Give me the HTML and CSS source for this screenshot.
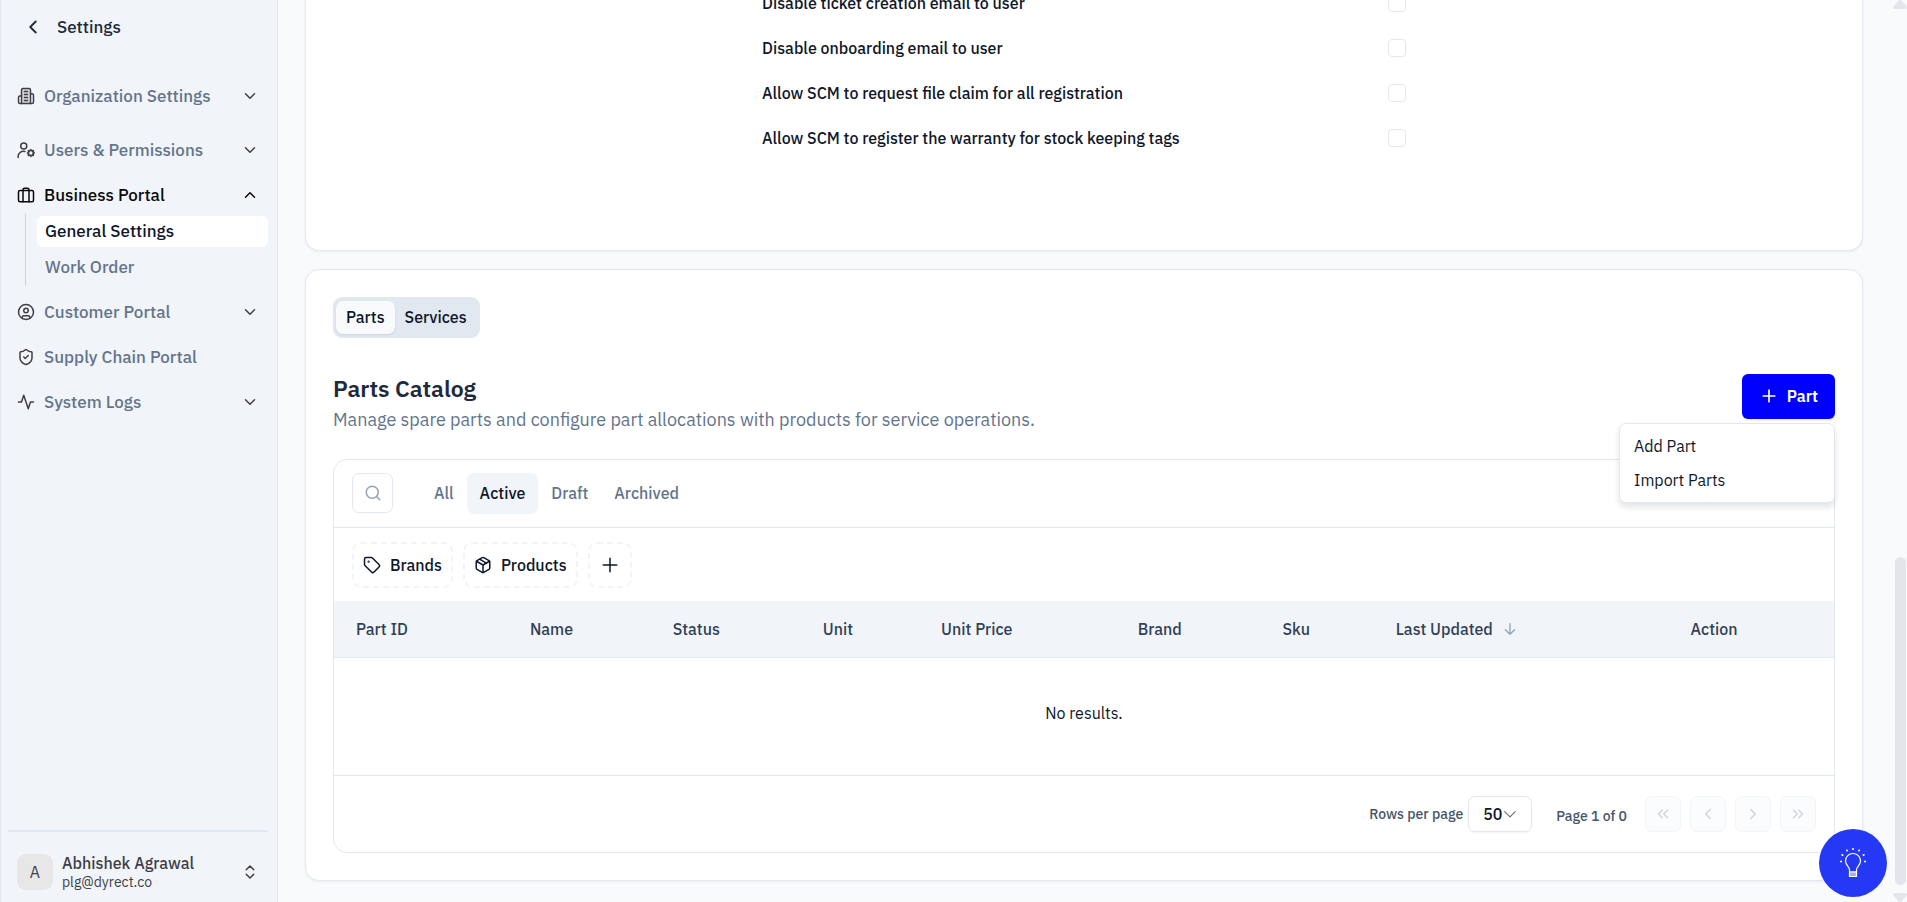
FILE: index.html
```html
<!DOCTYPE html>
<html lang="en">
<head>
  <meta charset="UTF-8" />
  <meta name="viewport" content="width=device-width, initial-scale=1.0" />
  <title>Settings - General Settings</title>
  <link rel="stylesheet" href="styles.css">
</head>
<body>
  <aside class="sidebar">
    <a href="#" class="back-link">
      <svg class="icon icon-back" viewBox="0 0 24 24"><path d="m15 18-6-6 6-6"/></svg>
      Settings
    </a>

    <nav class="menu">
      <button class="menu-item first">
        <svg class="icon" viewBox="0 0 24 24"><path class="shade" d="M6 22V4a2 2 0 0 1 2-2h8a2 2 0 0 1 2 2v18Z"/><path d="M6 12H4a2 2 0 0 0-2 2v6a2 2 0 0 0 2 2h2"/><path d="M18 9h2a2 2 0 0 1 2 2v9a2 2 0 0 1-2 2h-2"/><path d="M10 6h4M10 10h4M10 14h4M10 18h4"/></svg>
        <span>Organization Settings</span>
        <svg class="icon chevron" viewBox="0 0 24 24"><path d="m6 9 6 6 6-6"/></svg>
      </button>
      <button class="menu-item">
        <svg class="icon" viewBox="0 0 24 24"><path d="M1.500 22v-1.500a7 7 0 0 1 9-6.500"/><circle cx="9" cy="6.500" r="4"/><circle cx="18.500" cy="16" r="3.500" stroke-width="2.500"/><path stroke-width="1.500" d="M18.500 11.500v-.5M18.500 21v-.5M14 16h-.5M23.500 16H23M15.300 12.800l-.3-.3M22 19.500l-.3-.3M15.300 19.200l-.3.3M22 12.500l-.3.3"/></svg>
        <span>Users &amp; Permissions</span>
        <svg class="icon chevron" viewBox="0 0 24 24"><path d="m6 9 6 6 6-6"/></svg>
      </button>
      <button class="menu-item active">
        <svg class="icon" viewBox="0 0 24 24"><rect x="2" y="6" width="20" height="15" rx="2"/><path d="M16 21V5a2 2 0 0 0-2-2h-4a2 2 0 0 0-2 2v16"/></svg>
        <span>Business Portal</span>
        <svg class="icon chevron" viewBox="0 0 24 24"><path d="m18 15-6-6-6 6"/></svg>
      </button>
      <div class="submenu">
        <a href="#" class="active">General Settings</a>
        <a href="#">Work Order</a>
      </div>
      <button class="menu-item">
        <svg class="icon" viewBox="0 0 24 24"><circle cx="12" cy="12" r="10"/><circle cx="12" cy="10" r="3"/><path d="M7 20.600V19a2 2 0 0 1 2-2h6a2 2 0 0 1 2 2v1.600"/></svg>
        <span>Customer Portal</span>
        <svg class="icon chevron" viewBox="0 0 24 24"><path d="m6 9 6 6 6-6"/></svg>
      </button>
      <button class="menu-item">
        <svg class="icon" viewBox="0 0 24 24"><path d="M20 13c0 5-3.500 7.500-7.660 8.950a1 1 0 0 1-.67-.01C7.500 20.500 4 18 4 13V6a1 1 0 0 1 1-1c2 0 4.500-1.200 6.240-2.720a1.170 1.170 0 0 1 1.520 0C14.510 3.810 17 5 19 5a1 1 0 0 1 1 1z"/><path d="m9 12 2 2 4-4"/></svg>
        <span>Supply Chain Portal</span>
      </button>
      <button class="menu-item">
        <svg class="icon" viewBox="0 0 24 24"><path d="M22 12h-4l-3 9L9 3l-3 9H2"/></svg>
        <span>System Logs</span>
        <svg class="icon chevron" viewBox="0 0 24 24"><path d="m6 9 6 6 6-6"/></svg>
      </button>
    </nav>

    <button class="account">
      <span class="avatar">A</span>
      <span class="account-info">
        <span class="account-name">Abhishek Agrawal</span>
        <span class="account-mail">plg@dyrect.co</span>
      </span>
      <svg class="icon" viewBox="0 0 24 24"><path d="m7 15 5 5 5-5"/><path d="m7 9 5-5 5 5"/></svg>
    </button>
  </aside>

  <main class="content">
    <section class="card options">
      <div class="option">
        <label for="opt-ticket">Disable ticket creation email to user</label>
        <input type="checkbox" id="opt-ticket">
      </div>
      <div class="option">
        <label for="opt-onboarding">Disable onboarding email to user</label>
        <input type="checkbox" id="opt-onboarding">
      </div>
      <div class="option">
        <label for="opt-claim">Allow SCM to request file claim for all registration</label>
        <input type="checkbox" id="opt-claim">
      </div>
      <div class="option">
        <label for="opt-warranty">Allow SCM to register the warranty for stock keeping tags</label>
        <input type="checkbox" id="opt-warranty">
      </div>
    </section>

    <section class="card catalog">
      <div class="tabs">
        <button class="active">Parts</button>
        <button>Services</button>
      </div>

      <div class="catalog-header">
        <div>
          <h2>Parts Catalog</h2>
          <p>Manage spare parts and configure part allocations with products for service operations.</p>
        </div>
        <div class="dropdown">
          <button class="primary-btn">
            <svg class="icon" viewBox="0 0 24 24"><path d="M5 12h14M12 5v14"/></svg>
            Part
          </button>
          <div class="dropdown-menu">
            <button>Add Part</button>
            <button>Import Parts</button>
          </div>
        </div>
      </div>

      <div class="table-box">
        <div class="toolbar">
          <button class="search-btn" aria-label="Search">
            <svg class="icon" viewBox="0 0 24 24"><circle cx="11" cy="11" r="8"/><path d="m21 21-4.300-4.300"/></svg>
          </button>
          <div class="status-tabs">
            <button>All</button>
            <button class="active">Active</button>
            <button>Draft</button>
            <button>Archived</button>
          </div>
        </div>

        <div class="filters">
          <button>
            <svg class="icon" viewBox="0 0 24 24"><path d="M12.586 2.586A2 2 0 0 0 11.172 2H4a2 2 0 0 0-2 2v7.172a2 2 0 0 0 .586 1.414l8.704 8.704a2.426 2.426 0 0 0 3.420 0l6.580-6.580a2.426 2.426 0 0 0 0-3.420z"/><circle cx="7.500" cy="7.500" r=".5" fill="currentColor"/></svg>
            Brands
          </button>
          <button>
            <svg class="icon" viewBox="0 0 24 24"><path d="m7.500 4.270 9 5.150"/><path d="M21 8a2 2 0 0 0-1-1.730l-7-4a2 2 0 0 0-2 0l-7 4A2 2 0 0 0 3 8v8a2 2 0 0 0 1 1.730l7 4a2 2 0 0 0 2 0l7-4A2 2 0 0 0 21 16Z"/><path d="m3.300 7 8.700 5 8.700-5M12 22V12"/></svg>
            Products
          </button>
          <button class="add-filter" aria-label="Add filter">
            <svg class="icon" viewBox="0 0 24 24"><path d="M3 12h18M12 3v18"/></svg>
          </button>
        </div>

        <table>
          <colgroup>
            <col class="col-id"><col class="col-name"><col class="col-status"><col class="col-unit"><col class="col-price"><col class="col-brand"><col class="col-sku"><col class="col-updated"><col class="col-action">
          </colgroup>
          <thead>
            <tr>
              <th>Part ID</th>
              <th>Name</th>
              <th>Status</th>
              <th>Unit</th>
              <th>Unit Price</th>
              <th>Brand</th>
              <th>Sku</th>
              <th><span class="sort">Last Updated <svg class="icon" viewBox="0 0 24 24"><path d="M12 4v16M19 13l-7 7-7-7"/></svg></span></th>
              <th>Action</th>
            </tr>
          </thead>
          <tbody>
            <tr><td colspan="9">No results.</td></tr>
          </tbody>
        </table>

        <div class="pagination">
          <label for="rows">Rows per page</label>
          <div class="rows-select">
            <select id="rows"><option>50</option></select>
            <svg class="icon" viewBox="0 0 24 24"><path d="m3 8 9 9 9-9"/></svg>
          </div>
          <span class="page-count">Page 1 of 0</span>
          <div class="pager">
            <button disabled aria-label="First page"><svg class="icon" viewBox="0 0 24 24"><path d="m11 17-5-5 5-5M18 17l-5-5 5-5"/></svg></button>
            <button disabled aria-label="Previous page"><svg class="icon" viewBox="0 0 24 24"><path d="m15 18-6-6 6-6"/></svg></button>
            <button disabled aria-label="Next page"><svg class="icon" viewBox="0 0 24 24"><path d="m9 18 6-6-6-6"/></svg></button>
            <button disabled aria-label="Last page"><svg class="icon" viewBox="0 0 24 24"><path d="m6 17 5-5-5-5M13 17l5-5-5-5"/></svg></button>
          </div>
        </div>
      </div>
    </section>
  </main>

  <div class="scrollbar">
    <svg viewBox="0 0 14 9"><path d="M6 0h2l6 7q0 2-2 2H2Q0 9 0 7z"/></svg>
    <span class="thumb"></span>
    <svg viewBox="0 0 14 9"><path d="M6 9h2l6-7q0-2-2-2H2Q0 0 0 2z"/></svg>
  </div>

  <button class="help-btn" aria-label="Tips">
    <svg viewBox="0 0 28 30"><path d="M10.500 24v-2.500c0-2.500-4-4.500-4-8.500a7.500 7.500 0 0 1 15 0c0 4-4 6-4 8.500V24z"/><path class="base" d="M10.500 24h7v4.500h-7z"/><path class="rays" d="M14 0v2M7.500 1.700l1 1.600M20.500 1.700l-1 1.600M2.500 6.500l1.800 1M25.500 6.500l-1.800 1M1 13.500h2M25 13.500h2"/></svg>
  </button>
</body>
</html>
```
FILE: styles.css
```css
* {
  box-sizing: border-box;
  margin: 0;
  padding: 0;
}

body {
  font-family: 'IBM Plex Sans', Roboto, Arial, sans-serif;
  font-size: 16px;
  color: #0f172a;
  background: #f8fafc;
  height: 100vh;
  display: flex;
  overflow: hidden;
}

button, select {
  font: inherit;
  color: inherit;
  background: none;
  border: none;
  cursor: pointer;
}

a {
  color: inherit;
  text-decoration: none;
}

.icon {
  width: 18px;
  height: 18px;
  flex: none;
  fill: none;
  stroke: currentColor;
  stroke-width: 2;
  stroke-linecap: round;
  stroke-linejoin: round;
}

/* sidebar */
.sidebar {
  flex: none;
  width: 278px;
  background: #f1f5f9;
  border-left: 1px solid #e2e8f0;
  border-right: 1px solid #e2e8f0;
  padding: 0 9px 0 7px;
  display: flex;
  flex-direction: column;
}

.back-link {
  display: flex;
  align-items: center;
  gap: 13px;
  height: 54px;
  padding-left: 14px;
  font-size: 17px;
  font-weight: 500;
  color: #1e293b;
}

.icon-back {
  width: 22px;
  height: 22px;
}

.menu {
  flex: 1;
  padding-top: 19px;
}

.menu-item {
  display: flex;
  align-items: center;
  gap: 9px;
  width: 100%;
  height: 45px;
  padding: 0 9px;
  font-size: 17px;
  font-weight: 500;
  color: #64748b;
  text-align: left;
}

.menu-item.first {
  margin-bottom: 9px;
}

.menu-item span {
  flex: 1;
}

.menu-item .icon {
  color: #3f3f46;
}

.menu-item .shade {
  fill: #d4d4d8;
}

.menu-item.active,
.menu-item.active .icon {
  color: #09090b;
}

.submenu {
  display: flex;
  flex-direction: column;
  gap: 5px;
  margin: -3px 0 3px 17px;
  padding: 2px 0 3px 11px;
  border-left: 1px solid #cbd5e1;
}

.submenu a {
  height: 31px;
  line-height: 31px;
  padding-left: 8px;
  border-radius: 6px;
  font-size: 17px;
  font-weight: 500;
  color: #64748b;
}

.submenu a.active {
  background: #fff;
  color: #0f172a;
}

.account {
  display: flex;
  align-items: center;
  gap: 9px;
  height: 72px;
  padding: 10px 9px 0;
  border-top: 2px solid #e2e8f0;
  text-align: left;
  color: #3f3f46;
}

.avatar {
  width: 36px;
  height: 36px;
  line-height: 36px;
  border-radius: 9px;
  background: #e7e7e7;
  text-align: center;
}

.account-info {
  flex: 1;
  display: flex;
  flex-direction: column;
}

.account-name {
  font-weight: 500;
  line-height: 20px;
}

.account-mail {
  font-size: 14px;
  line-height: 18px;
}

/* page content, kept scrolled to the end */
.content {
  flex: 1;
  min-width: 0;
  padding: 0 44px 21px 27px;
  display: flex;
  flex-direction: column;
  justify-content: flex-end;
  gap: 18px;
}

.card {
  flex: none;
  background: #fff;
  border: 1px solid #e2e8f0;
  border-radius: 14px;
  box-shadow: 0 1px 3px rgba(15, 23, 42, 0.06);
  padding: 27px;
}

.options {
  padding-bottom: 89px;
}

.option {
  display: flex;
  align-items: center;
  justify-content: space-between;
  width: 43%;
  height: 45px;
  margin: 0 auto;
  padding: 0 1px;
  font-weight: 500;
}

.option input {
  appearance: none;
  width: 18px;
  height: 18px;
  border: 1px solid #e2e8f0;
  border-radius: 4px;
  background: #fff;
}

.tabs {
  display: inline-flex;
  background: #e2e8f0;
  border-radius: 9px;
  padding: 4px 3px;
}

.tabs button {
  height: 33px;
  padding: 0 10px;
  border-radius: 7px;
  font-weight: 500;
}

.tabs button.active {
  background: #f8fafc;
  box-shadow: 0 1px 2px rgba(15, 23, 42, 0.1);
}

.catalog-header {
  display: flex;
  justify-content: space-between;
  align-items: flex-start;
  margin: 36px 0 25px;
}

.catalog-header h2 {
  margin-bottom: 4px;
  font-size: 23px;
  font-weight: 600;
  line-height: 28px;
  color: #1e293b;
}

.catalog-header p {
  font-size: 18px;
  line-height: 28px;
  color: #64748b;
}

.dropdown {
  position: relative;
}

.primary-btn {
  display: flex;
  align-items: center;
  gap: 8px;
  height: 45px;
  padding: 0 17px;
  border-radius: 6px;
  background: #0000ff;
  color: #fff;
  font-weight: 600;
  box-shadow: 0 1px 2px rgba(15, 23, 42, 0.1);
}

.primary-btn .icon {
  width: 20px;
  height: 20px;
}

.dropdown-menu {
  position: absolute;
  top: 49px;
  right: 0;
  width: 216px;
  padding: 5px 4px;
  background: #fff;
  border: 1px solid #e2e8f0;
  border-radius: 7px;
  box-shadow: 0 4px 6px rgba(15, 23, 42, 0.12);
}

.dropdown-menu button {
  display: block;
  width: 100%;
  height: 34px;
  padding: 0 10px;
  text-align: left;
}

/* table */
.table-box {
  border: 1px solid #e2e8f0;
  border-radius: 14px;
}

.toolbar {
  display: flex;
  align-items: center;
  gap: 28px;
  height: 68px;
  padding: 0 18px;
  border-bottom: 1px solid #e2e8f0;
}

.search-btn {
  display: flex;
  align-items: center;
  justify-content: center;
  width: 41px;
  height: 40px;
  border: 1px solid #e2e8f0;
  border-radius: 7px;
  color: #94a3b8;
}

.status-tabs {
  display: flex;
}

.status-tabs button {
  height: 41px;
  padding: 0 13px;
  border-radius: 7px;
  font-weight: 500;
  color: #64748b;
}

.status-tabs button.active {
  background: #f1f5f9;
  color: #0f172a;
}

.filters {
  display: flex;
  gap: 10px;
  padding: 14px 18px 13px;
}

.filters button {
  display: flex;
  align-items: center;
  gap: 9px;
  height: 46px;
  padding: 0 9px;
  border: 2px dashed #f1f5f9;
  border-radius: 9px;
  font-weight: 500;
}

.filters .add-filter {
  padding: 0 11px;
}

table {
  width: 100%;
  table-layout: fixed;
  border-collapse: collapse;
}

.col-id { width: 9.7%; }
.col-name { width: 9.6%; }
.col-status { width: 9.7%; }
.col-unit { width: 9.2%; }
.col-price { width: 9.3%; }
.col-brand { width: 15.1%; }
.col-sku { width: 3.1%; }
.col-updated { width: 18.3%; }

th {
  height: 57px;
  background: #f1f5f9;
  border-bottom: 1px solid #e2e8f0;
  font-weight: 500;
  color: #334155;
  white-space: nowrap;
}

th:first-child {
  text-align: left;
  padding-left: 22px;
}

.sort {
  display: inline-flex;
  align-items: center;
  gap: 9px;
}

.sort .icon {
  color: #94a3b8;
  width: 16px;
  height: 16px;
}

td {
  height: 118px;
  padding-bottom: 8px;
  border-bottom: 1px solid #e2e8f0;
  text-align: center;
}

.pagination {
  display: flex;
  align-items: center;
  justify-content: flex-end;
  height: 76px;
  padding: 0 18px;
  font-size: 14px;
  font-weight: 500;
  color: #475569;
}

.rows-select {
  display: flex;
  align-items: center;
  width: 64px;
  height: 36px;
  margin: 0 24px 0 5px;
  border: 1px solid #e2e8f0;
  border-radius: 7px;
  box-shadow: 0 1px 2px rgba(15, 23, 42, 0.05);
}

.rows-select select {
  appearance: none;
  width: 100%;
  height: 100%;
  padding-left: 14px;
  font-size: 16px;
  color: #0f172a;
}

.rows-select .icon {
  width: 14px;
  height: 14px;
  margin: 0 14px 0 -28px;
  color: #71717a;
  pointer-events: none;
}

.page-count {
  padding-top: 4px;
}

.pager {
  display: flex;
  gap: 9px;
  margin-left: 18px;
}

.pager button {
  display: flex;
  align-items: center;
  justify-content: center;
  width: 36px;
  height: 36px;
  border: 1px solid #f1f5f9;
  border-radius: 7px;
  background: #fbfcfe;
  color: #cbd5e1;
}

.scrollbar {
  position: fixed;
  top: 0;
  right: 0;
  width: 14px;
  height: 100%;
  display: flex;
  flex-direction: column;
  align-items: center;
}

.scrollbar svg {
  width: 14px;
  height: 9px;
  fill: #e2e5eb;
}

.scrollbar .thumb {
  width: 11px;
  height: 328px;
  margin: auto 0 8px;
  border-radius: 6px;
  background: #e2e5eb;
}

.help-btn {
  position: fixed;
  right: 20px;
  bottom: 5px;
  width: 68px;
  height: 68px;
  border-radius: 50%;
  background: #2438f5;
}

.help-btn svg {
  width: 28px;
  height: 30px;
  vertical-align: middle;
  fill: none;
  stroke: #fff;
  stroke-width: 1.2;
}

.help-btn .base {
  fill: #a5adfb;
}

.help-btn .rays {
  stroke-width: 1.5;
}
```
